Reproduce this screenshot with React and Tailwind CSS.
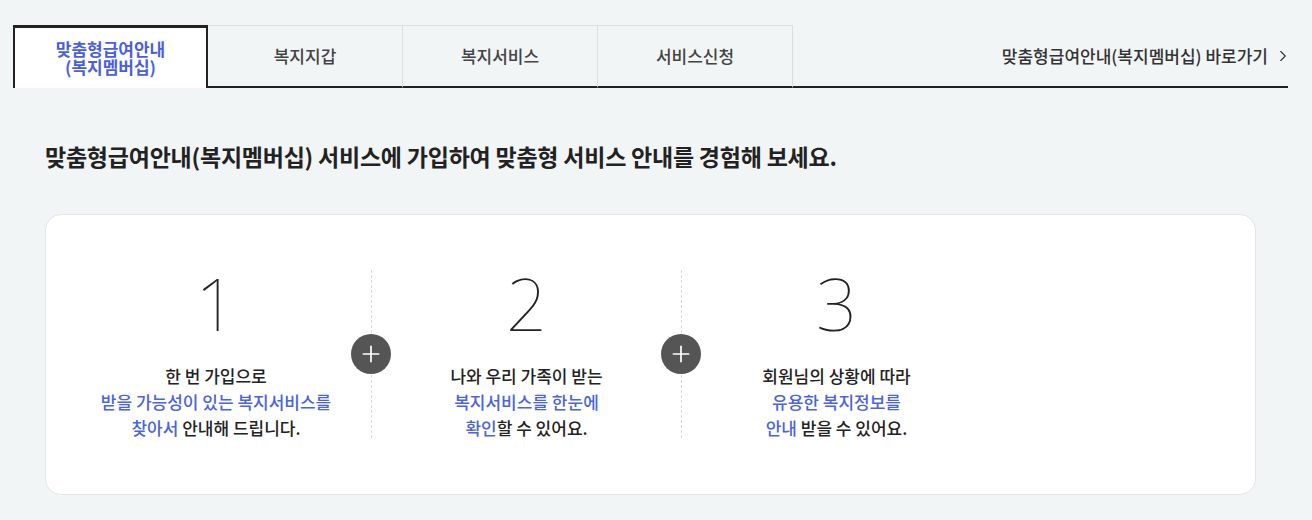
import { ChevronRight, Plus } from "lucide-react";

const tabs = ["복지지갑", "복지서비스", "서비스신청"];

const steps = [
  {
    num: "1",
    lines: [
      [{ t: "한 번 가입으로" }],
      [{ t: "받을 가능성이 있는 복지서비스를", blue: true }],
      [{ t: "찾아서", blue: true }, { t: " 안내해 드립니다." }],
    ],
  },
  {
    num: "2",
    lines: [
      [{ t: "나와 우리 가족이 받는" }],
      [{ t: "복지서비스를 한눈에", blue: true }],
      [{ t: "확인", blue: true }, { t: "할 수 있어요." }],
    ],
  },
  {
    num: "3",
    lines: [
      [{ t: "회원님의 상황에 따라" }],
      [{ t: "유용한 복지정보를", blue: true }],
      [{ t: "안내", blue: true }, { t: " 받을 수 있어요." }],
    ],
  },
];

export default function App() {
  return (
    <div
      className="min-h-[520px] bg-[#f2f5f6] pt-[25px] text-[#222]"
      style={{ fontFamily: '"Noto Sans CJK KR", "Noto Sans", sans-serif' }}
    >
      {/* Tabs */}
      <div className="ml-[13px] flex w-[1275px] items-stretch">
        <div className="flex h-[63px] w-[195px] flex-col items-center justify-center border-x-2 border-t-[3px] border-[#222] bg-white text-[17px] font-bold leading-[18px] text-[#4a5fe0]">
          <span>맞춤형급여안내</span>
          <span>(복지멤버십)</span>
        </div>
        {tabs.map((tab) => (
          <div
            key={tab}
            className="flex h-[63px] w-[195px] items-center justify-center border-r border-t border-b-2 border-[#dcdfe1] border-b-[#222] text-[17px] font-medium text-[#444]"
          >
            {tab}
          </div>
        ))}
        <div className="flex flex-1 items-center justify-end gap-[6px] border-b-2 border-[#222] text-[17px] font-medium text-[#333]">
          <span>맞춤형급여안내(복지멤버십) 바로가기</span>
          <ChevronRight size={18} strokeWidth={1.5} className="mr-[-4px]" />
        </div>
      </div>

      {/* Heading */}
      <h2 className="ml-[45px] mt-[51px] text-[23px] font-bold tracking-[-0.23px] text-[#222]">
        맞춤형급여안내(복지멤버십) 서비스에 가입하여 맞춤형 서비스 안내를 경험해 보세요.
      </h2>

      {/* Steps card */}
      <div className="ml-[45px] mt-[40px] flex h-[281px] w-[1211px] items-start rounded-2xl border border-[#e2e4e6] bg-white pl-[15px] pt-[55px]">
        {steps.map((step, i) => (
          <div
            key={step.num}
            className={`relative flex h-[168px] w-[310px] flex-col items-center ${
              i > 0 ? "border-l border-dashed border-[#d9d9d9]" : ""
            }`}
          >
            {i > 0 && (
              <div className="absolute left-[-21px] top-[64px] flex h-[40px] w-[40px] items-center justify-center rounded-full bg-[#555]">
                <Plus size={26} strokeWidth={1.6} className="text-white" />
              </div>
            )}
            <div
              className="mt-[-7px] text-[72px] font-thin leading-[80px] text-[#222]"
              style={{ fontFamily: '"Noto Sans", "Noto Sans CJK KR", sans-serif' }}
            >
              {step.num}
            </div>
            <div className="mt-[20px] text-center text-[17px] font-medium leading-[26px]">
              {step.lines.map((line, j) => (
                <p key={j}>
                  {line.map((seg, k) => (
                    <span key={k} className={seg.blue ? "text-[#4a63e1]" : "text-[#222]"}>
                      {seg.t}
                    </span>
                  ))}
                </p>
              ))}
            </div>
          </div>
        ))}
      </div>
    </div>
  );
}
